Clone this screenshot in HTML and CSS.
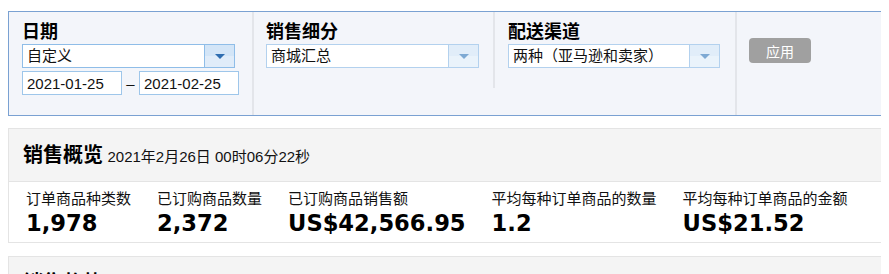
FILE: index.html
```html
<!DOCTYPE html>
<html lang="zh-CN">
<head>
    <meta charset="UTF-8">
    <meta name="viewport" content="width=device-width, initial-scale=1.0">
    <title>销售概览</title>
    <link rel="stylesheet" href="styles.css">
</head>
<body>
<div class="page">
    <div class="filters">
        <div class="filter-group group-date">
            <div class="filter-label">日期</div>
            <div class="combo combo-active">
                <span class="combo-text">自定义</span>
                <span class="combo-btn"><i class="arrow"></i></span>
            </div>
            <div class="date-row">
                <input type="text" class="date-input" value="2021-01-25">
                <span class="date-dash">–</span>
                <input type="text" class="date-input" value="2021-02-25">
            </div>
        </div>
        <div class="filter-group group-split">
            <div class="filter-label">销售细分</div>
            <div class="combo">
                <span class="combo-text">商城汇总</span>
                <span class="combo-btn"><i class="arrow"></i></span>
            </div>
        </div>
        <div class="filter-group group-channel">
            <div class="filter-label">配送渠道</div>
            <div class="combo combo-narrow">
                <span class="combo-text">两种（亚马逊和卖家）</span>
                <span class="combo-btn"><i class="arrow"></i></span>
            </div>
        </div>
        <div class="filter-group group-apply">
            <button type="button" class="apply-btn">应用</button>
        </div>
    </div>

    <div class="card">
        <div class="card-header">
            <span class="card-title">销售概览</span>
            <span class="card-time">2021年2月26日 00时06分22秒</span>
        </div>
        <div class="card-body">
            <div class="metric">
                <div class="metric-label">订单商品种类数</div>
                <div class="metric-value">1,978</div>
            </div>
            <div class="metric">
                <div class="metric-label">已订购商品数量</div>
                <div class="metric-value">2,372</div>
            </div>
            <div class="metric">
                <div class="metric-label">已订购商品销售额</div>
                <div class="metric-value">US$42,566.95</div>
            </div>
            <div class="metric">
                <div class="metric-label">平均每种订单商品的数量</div>
                <div class="metric-value">1.2</div>
            </div>
            <div class="metric">
                <div class="metric-label">平均每种订单商品的金额</div>
                <div class="metric-value">US$21.52</div>
            </div>
        </div>
    </div>

    <div class="card card-next">
        <div class="card-header">
            <span class="card-title">销售趋势</span>
        </div>
    </div>
</div>
</body>
</html>
```

FILE: styles.css
```css
html {
    overflow: hidden;
}
body {
    margin: 8px;
    font-family: "Liberation Sans", "Noto Sans CJK SC", sans-serif;
    color: #111;
    background: #fff;
}
.page {
    width: 960px;
}
.filters {
    display: flex;
    align-items: flex-start;
    margin-top: 3px;
    border: 1px solid #7aa1d2;
    background-color: #f3f5fa;
}
.filter-group {
    box-sizing: border-box;
    padding: 8px 0 20px;
}
.group-date {
    width: 245px;
    padding-left: 13px;
    border-right: 2px solid #e3e5ea;
}
.group-split {
    width: 241px;
    padding-left: 12px;
    border-right: 2px solid #e3e5ea;
}
.group-channel {
    width: 240px;
    padding-left: 13px;
}
.group-apply {
    align-self: stretch;
    flex: 1;
    padding: 26px 0 0 12px;
    border-left: 2px solid #e3e5ea;
}
.filter-label {
    font-size: 18px;
    font-weight: bold;
    line-height: 24px;
    color: #000;
}
.combo {
    display: flex;
    box-sizing: border-box;
    width: 213px;
    height: 24px;
    border: 1px solid #b3d1ee;
    background-color: #fff;
}
.combo-narrow {
    width: 212px;
}
.combo-text {
    flex: 1;
    padding-left: 4px;
    font-size: 15px;
    line-height: 22px;
    white-space: nowrap;
    overflow: hidden;
}
.combo-btn {
    display: flex;
    align-items: center;
    justify-content: center;
    width: 29px;
    border-left: 1px solid #b3d1ee;
    background: linear-gradient(#e1edf9 50%, #eaf3fb 50%);
}
.arrow {
    display: block;
    width: 0;
    height: 0;
    border-left: 5px solid transparent;
    border-right: 5px solid transparent;
    border-top: 5px solid #7ea9d3;
}
.combo-active {
    border-color: #8fbde8;
}
.combo-active .combo-btn {
    border-left-color: #8fbde8;
    background: linear-gradient(#d3e5f7 50%, #e0ecf9 50%);
}
.combo-active .arrow {
    border-top-color: #2f6db0;
}
.date-row {
    display: flex;
    align-items: center;
    margin-top: 3px;
}
.date-input {
    box-sizing: border-box;
    width: 100px;
    height: 24px;
    margin: 0;
    padding: 0 4px;
    border: 1px solid #9ec6ea;
    font-family: inherit;
    font-size: 15px;
    color: #111;
    background: #fff;
    outline: none;
}
.date-dash {
    width: 17px;
    text-align: center;
    font-size: 15px;
}
.apply-btn {
    width: 62px;
    height: 25px;
    padding: 0;
    border: none;
    border-radius: 4px;
    background-color: #a0a0a0;
    color: #fff;
    font-family: inherit;
    font-size: 14px;
}
.card {
    margin-top: 12px;
    border: 1px solid #e4e4e4;
    background-color: #fff;
}
.card-next {
    margin-top: 13px;
}
.card-header {
    height: 52px;
    padding-left: 14px;
    border-bottom: 1px solid #e4e4e4;
    background-color: #f4f4f4;
    line-height: 52px;
    white-space: nowrap;
}
.card-title {
    font-size: 20px;
    font-weight: bold;
    color: #000;
}
.card-time {
    font-size: 15px;
}
.card-body {
    display: flex;
    gap: 26px;
    padding: 6px 0 6px 17px;
}
.metric-label {
    font-size: 15px;
    line-height: 22px;
    white-space: nowrap;
}
.metric-value {
    font-family: "DejaVu Sans", Verdana, sans-serif;
    font-size: 22.6px;
    font-weight: bold;
    line-height: 26px;
    color: #000;
    white-space: nowrap;
}
```
